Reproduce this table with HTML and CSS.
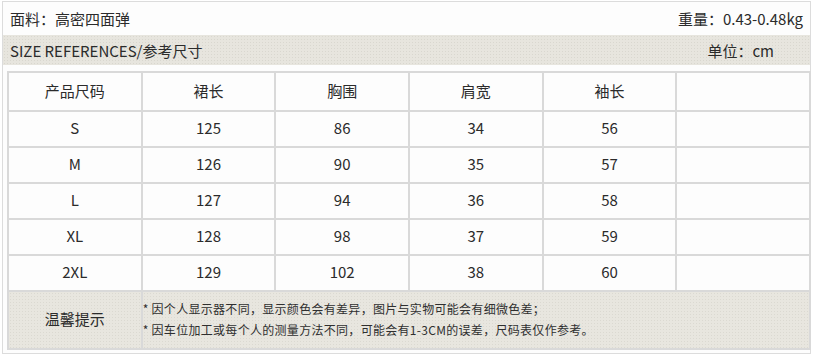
FILE: index.html
```html
<!DOCTYPE html>
<html lang="zh">
<head>
<meta charset="utf-8">
<link rel="stylesheet" href="styles.css">
</head>
<body>
<div class="frame">
  <div class="top">
    <span>面料：高密四面弹</span>
    <span>重量：0.43-0.48kg</span>
  </div>
  <div class="band">
    <span>SIZE REFERENCES/参考尺寸</span>
    <span class="unit">单位：cm</span>
  </div>
  <table class="sizes">
    <colgroup>
      <col><col><col><col><col><col>
    </colgroup>
    <tr class="head"><td>产品尺码</td><td>裙长</td><td>胸围</td><td>肩宽</td><td>袖长</td><td></td></tr>
    <tr><td>S</td><td>125</td><td>86</td><td>34</td><td>56</td><td></td></tr>
    <tr><td>M</td><td>126</td><td>90</td><td>35</td><td>57</td><td></td></tr>
    <tr><td>L</td><td>127</td><td>94</td><td>36</td><td>58</td><td></td></tr>
    <tr><td>XL</td><td>128</td><td>98</td><td>37</td><td>59</td><td></td></tr>
    <tr><td>2XL</td><td>129</td><td>102</td><td>38</td><td>60</td><td></td></tr>
    <tr class="tips">
      <td class="tips-label">温馨提示</td>
      <td class="tips-text" colspan="5">
        <p>* 因个人显示器不同，显示颜色会有差异，图片与实物可能会有细微色差；</p>
        <p>* 因车位加工或每个人的测量方法不同，可能会有1-3CM的误差，尺码表仅作参考。</p>
      </td>
    </tr>
  </table>
</div>
</body>
</html>
```
FILE: styles.css
```css
html, body {
  margin: 0;
  padding: 0;
  background: #ffffff;
}

body {
  font-family: "Noto Sans CJK SC", "Noto Sans", sans-serif;
  color: #2b2b2b;
  font-size: 15px;
}

.frame {
  margin: 1px 2px 0 2px;
  width: 809px;
  height: 353px;
  border: 1px solid #dcdcdc;
  box-sizing: border-box;
  background: #fdfdfd;
  display: flex;
  flex-direction: column;
}

.top {
  height: 33px;
  display: flex;
  justify-content: space-between;
  align-items: center;
  padding: 0 7px 1px 7px;
  box-sizing: border-box;
  line-height: 1;
}

.band {
  height: 30px;
  display: flex;
  justify-content: space-between;
  align-items: center;
  padding: 0 36px 0 7px;
  background-color: #e7e5de;
  background-image: radial-gradient(circle, #d9d7cf 0.6px, transparent 0.7px);
  background-size: 3px 3px;
  line-height: 1;
}

.sizes {
  margin: 6px 0 0 4px;
  width: 804px;
  border-collapse: collapse;
  table-layout: fixed;
}

.sizes td {
  border: 2px solid #d9d9d9;
  text-align: center;
  padding: 0 0 3px 0;
  height: 31px;
  line-height: 1;
  background: #fdfdfd;
}

.sizes .head td {
  height: 34px;
  padding-bottom: 3px;
}

.sizes .tips td {
  height: 53px;
  padding-bottom: 3px;
  background-color: #e8e6df;
  background-image: radial-gradient(circle, #dbd9d1 0.6px, transparent 0.7px);
  background-size: 3px 3px;
}

.tips-text {
  text-align: left !important;
  padding-left: 0 !important;
  font-size: 12px;
  letter-spacing: 0.3px;
  color: #2f2f2f;
}

.tips-text p {
  margin: 0;
  line-height: 21px;
}
```
